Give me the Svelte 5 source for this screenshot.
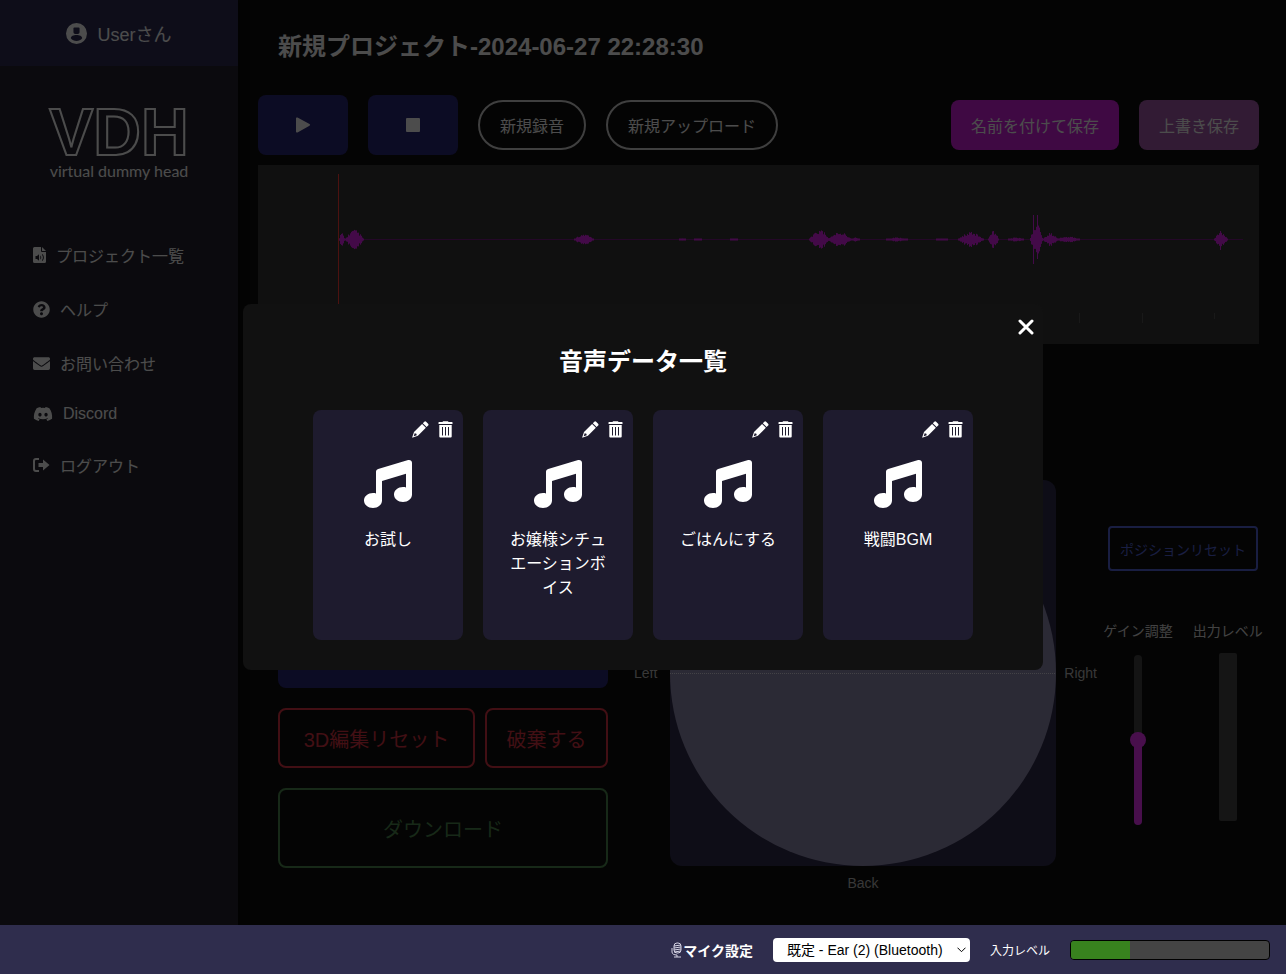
<script lang="ts">
  let gain = 50;
  let inputLevel = 30;
  let device = 'default';
  let isModalOpen = true;

  const menuItems = [
    { icon: 'file', label: 'プロジェクト一覧' },
    { icon: 'help', label: 'ヘルプ' },
    { icon: 'mail', label: 'お問い合わせ' },
    { icon: 'discord', label: 'Discord' },
    { icon: 'logout', label: 'ログアウト' }
  ];

  let audioList = [
    { id: 1, name: 'お試し' },
    { id: 2, name: 'お嬢様シチュエーションボイス' },
    { id: 3, name: 'ごはんにする' },
    { id: 4, name: '戦闘BGM' }
  ];

  // [開始位置, 終了位置, 振幅]
  const bursts = [
    [81, 87, 6], [87, 106, 9], [316, 336, 5], [421, 428, 1], [436, 444, 1], [472, 480, 1],
    [551, 572, 9], [570, 594, 7], [594, 602, 2], [628, 650, 2], [678, 690, 1], [700, 726, 7],
    [730, 741, 8], [750, 766, 2], [772, 785, 15], [785, 800, 6], [798, 822, 3], [956, 970, 7]
  ];

  function buildWave() {
    let d = '';
    for (const [start, end, amp] of bursts) {
      for (let x = start; x < end; x++) {
        const t = (x - start + 0.5) / (end - start);
        const noise = Math.abs(Math.sin(x * 12.9898) * 43758.5453) % 1;
        const h = Math.max(1, amp * Math.sin(Math.PI * t) * (0.6 + 0.5 * noise));
        d += `M${x + 0.5} ${74.5 - h}V${74.5 + h}`;
      }
    }
    return d + 'M775.5 50V99M779.5 50V94M962.5 66V85';
  }

  const wavePath = buildWave();

  function removeAudio(id: number) {
    audioList = audioList.filter(a => a.id !== id);
  }

  function resetPosition() {
    gain = 50;
  }
</script>

<div class="layout">
  <aside class="sidebar">
    <div class="user">
      <svg width="21" height="21" viewBox="0 0 24 24" aria-hidden="true">
        <path fill="currentColor" fill-rule="evenodd" d="M12 0a12 12 0 1 0 0 24 12 12 0 0 0 0-24zM9.500 5h5a1 1 0 0 1 1 1v4.500a2 2 0 0 1-2 2h-3a2 2 0 0 1-2-2V6a1 1 0 0 1 1-1zM5.500 17.500c0-2.500 3-3.800 6.500-3.800s6.500 1.300 6.500 3.800c-1.500 2-4 3-6.500 3s-5-1-6.500-3z" />
      </svg>
      <span>Userさん</span>
    </div>

    <div class="logo">
      <span class="logo-mark">VDH</span>
      <span class="logo-sub">virtual dummy head</span>
    </div>

    <nav>
      {#each menuItems as item}
        <a href="/">
          {#if item.icon === 'file'}
            <svg width="13" height="16" viewBox="0 0 13 16" aria-hidden="true">
              <path fill="currentColor" fill-rule="evenodd" d="M1.500 0H8v4a1 1 0 0 0 1 1h4v9.500a1.500 1.500 0 0 1-1.500 1.500h-10A1.500 1.500 0 0 1 0 14.500v-13A1.500 1.500 0 0 1 1.500 0zM9 0l4 4H9zM2.500 9v3H4l2 1.800V7.200L4 9zM7.300 8.500v4c1.200-.6 1.200-3.400 0-4zM9 7v1c1.200 1 1.200 4 0 5v1c2.500-1.200 2.500-5.800 0-7z" />
            </svg>
          {:else if item.icon === 'help'}
            <svg width="17" height="17" viewBox="0 0 512 512" aria-hidden="true">
              <path fill="currentColor" d="M504 256c0 137-111 248-248 248S8 393 8 256C8 119.100 119 8 256 8s248 111.100 248 248zM262.700 90c-54.500 0-89.300 23-116.600 63.800-3.500 5.300-2.400 12.400 2.700 16.200l34.700 26.300c5.200 4 12.600 3 16.700-2.100 17.900-22.700 30.100-35.800 57.300-35.800 20.400 0 45.700 13.100 45.700 33 0 15-12.400 22.700-32.500 34C247.100 238.500 216 255 216 296v4c0 6.600 5.400 12 12 12h56c6.600 0 12-5.400 12-12v-1.300c0-28.500 83.200-29.700 83.200-106.700 0-58-60.200-102-116.500-102zM256 338c-25.400 0-46 20.600-46 46s20.600 46 46 46 46-20.600 46-46-20.600-46-46-46z" />
            </svg>
          {:else if item.icon === 'mail'}
            <svg width="17" height="17" viewBox="0 0 512 512" aria-hidden="true">
              <path fill="currentColor" d="M502.300 190.800c3.900-3.100 9.700-.2 9.700 4.700V400c0 26.500-21.500 48-48 48H48c-26.500 0-48-21.500-48-48V195.600c0-5 5.700-7.800 9.700-4.700 22.400 17.400 52.100 39.500 154.100 113.600 21.100 15.400 56.700 47.800 92.200 47.600 35.700.3 72-32.800 92.300-47.600 102-74.100 131.600-96.300 154-113.700zM256 320c23.200.4 56.600-29.200 73.400-41.400 132.700-96.300 142.800-104.700 173.400-128.700 5.800-4.500 9.200-11.500 9.200-18.900v-19c0-26.500-21.500-48-48-48H48c-26.500 0-48 21.500-48 48v19c0 7.400 3.400 14.300 9.200 18.900 30.600 23.900 40.700 32.400 173.400 128.700 16.800 12.200 50.200 41.800 73.400 41.400z" />
            </svg>
          {:else if item.icon === 'discord'}
            <svg width="20" height="16" viewBox="0 1 16 14" aria-hidden="true">
              <path fill="currentColor" d="M13.545 2.907a13.200 13.200 0 0 0-3.257-1.011.05.05 0 0 0-.052.025c-.141.25-.297.577-.406.833a12.200 12.200 0 0 0-3.658 0 8 8 0 0 0-.412-.833.05.05 0 0 0-.052-.025c-1.125.194-2.220.534-3.257 1.011a.04.04 0 0 0-.021.018C.356 6.024-.213 9.047.066 12.032q.003.022.021.037a13.300 13.300 0 0 0 3.995 2.020.05.05 0 0 0 .056-.019q.463-.63.818-1.329a.05.05 0 0 0-.01-.059l-.018-.011a9 9 0 0 1-1.248-.595.05.05 0 0 1-.02-.066l.015-.019q.127-.095.248-.195a.05.05 0 0 1 .051-.007c2.619 1.196 5.454 1.196 8.041 0a.05.05 0 0 1 .053.007q.121.1.248.195a.05.05 0 0 1-.004.085 8 8 0 0 1-1.249.594.05.05 0 0 0-.03.03.05.05 0 0 0 .003.041c.24.465.515.909.817 1.329a.05.05 0 0 0 .056.019 13.200 13.200 0 0 0 4.001-2.020.05.05 0 0 0 .021-.037c.334-3.451-.559-6.449-2.366-9.106a.03.03 0 0 0-.02-.019m-8.198 7.307c-.789 0-1.438-.724-1.438-1.612s.637-1.613 1.438-1.613c.807 0 1.450.73 1.438 1.613 0 .888-.637 1.612-1.438 1.612m5.316 0c-.788 0-1.438-.724-1.438-1.612s.637-1.613 1.438-1.613c.807 0 1.451.73 1.438 1.613 0 .888-.631 1.612-1.438 1.612" />
            </svg>
          {:else}
            <svg width="17" height="16" viewBox="0 0 17 16" aria-hidden="true">
              <path d="M6 2H3a2 2 0 0 0-2 2v8a2 2 0 0 0 2 2h3" fill="none" stroke="currentColor" stroke-width="2" />
              <path fill="currentColor" d="M10 2.500 16.500 8 10 13.500V10H5.500V6H10z" />
            </svg>
          {/if}
          <span>{item.label}</span>
        </a>
      {/each}
    </nav>
  </aside>

  <main>
    <h1>新規プロジェクト-2024-06-27 22:28:30</h1>

    <div class="toolbar">
      <button class="transport" aria-label="再生">
        <svg width="16" height="18" viewBox="0 0 16 18"><path fill="currentColor" d="M1 2.500v13a1 1 0 0 0 1.500.9l12-6.600a1 1 0 0 0 0-1.700l-12-6.500A1 1 0 0 0 1 2.500z" /></svg>
      </button>
      <button class="transport" aria-label="停止">
        <svg width="14" height="14" viewBox="0 0 14 14"><rect width="14" height="14" rx="1" fill="currentColor" /></svg>
      </button>
      <button class="pill">新規録音</button>
      <button class="pill">新規アップロード</button>
      <button class="save save-as">名前を付けて保存</button>
      <button class="save">上書き保存</button>
    </div>

    <div class="waveform">
      <svg width="100%" height="179" viewBox="0 0 1001 179" preserveAspectRatio="none" aria-hidden="true">
        <path d="M81 74.500H985" stroke="#7a1d85" stroke-width="1" />
        <path d={wavePath} stroke="#e022f0" stroke-width="1" />
        <path d="M80.500 9V179" stroke="#ff3c38" stroke-width="1" />
        <path d="M821.500 148v10M884.500 148v10M956.500 148v6" stroke="#555" stroke-width="1" />
      </svg>
    </div>

    <div class="editor">
      <div class="actions">
        <button class="edit" aria-label="3D編集"></button>
        <div class="action-row">
          <button class="danger">3D編集リセット</button>
          <button class="danger">破棄する</button>
        </div>
        <button class="download">ダウンロード</button>
      </div>

      <div class="field">
        <span class="left">Left</span>
        <div class="pad">
          <div class="circle"></div>
        </div>
        <span class="right">Right</span>
        <span class="back">Back</span>
      </div>

      <div class="levels">
        <button class="position-reset" on:click={resetPosition}>ポジションリセット</button>
        <div class="level-row">
          <div class="level">
            <label for="gain">ゲイン調整</label>
            <input
              id="gain"
              type="range"
              min="0"
              max="100"
              bind:value={gain}
              style="background: linear-gradient(to top, #f035ff {gain}%, #454545 {gain}%)"
            />
          </div>
          <div class="level">
            <span>出力レベル</span>
            <div class="output-bar"></div>
          </div>
        </div>
      </div>
    </div>
  </main>
</div>

{#if isModalOpen}
  <div class="overlay">
    <div class="modal" role="dialog" aria-labelledby="modal-title">
      <button class="close" aria-label="閉じる" on:click={() => (isModalOpen = false)}>
        <svg width="16" height="16" viewBox="0 0 16 16"><path d="M2 2l12 12M14 2L2 14" stroke="currentColor" stroke-width="3" stroke-linecap="round" /></svg>
      </button>
      <h2 id="modal-title">音声データ一覧</h2>
      <div class="cards">
        {#each audioList as audio (audio.id)}
          <div class="card">
            <div class="card-actions">
              <button aria-label="名前を変更">
                <svg width="17" height="17" viewBox="0 0 17 17">
                  <path fill="currentColor" fill-rule="evenodd" d="M12.300.8a1.300 1.300 0 0 1 1.800 0l2 2a1.300 1.300 0 0 1 0 1.800l-1.500 1.500-3.800-3.800zM10.100 3l3.800 3.800-8 8L.9 16.600a.5.5 0 0 1-.6-.6L2 11zM2.700 12.300l-1 3 3-1-.3-1.600z" />
                </svg>
              </button>
              <button aria-label="削除" on:click={() => removeAudio(audio.id)}>
                <svg width="15" height="17" viewBox="0 0 15 17">
                  <path fill="currentColor" fill-rule="evenodd" d="M4.500 1 5 .3h5l.5.7H14a.5.5 0 0 1 .5.500V3H.5V1.500A.5.5 0 0 1 1 1zM1.300 4h12.400v11.500a1 1 0 0 1-1 1H2.300a1 1 0 0 1-1-1zM4 6v8.500h1V6zM7 6v8.500h1V6zM10 6v8.500h1V6z" />
                </svg>
              </button>
            </div>
            <svg class="note" width="48" height="48" viewBox="0 0 512 512" aria-hidden="true">
              <path fill="currentColor" d="M499.100 6.300c8.100 6 12.900 15.600 12.900 25.700v336c0 44.200-43 80-96 80s-96-35.800-96-80 43-80 96-80c11.200 0 22 1.600 32 4.600V147L192 223.800V432c0 44.200-43 80-96 80s-96-35.800-96-80 43-80 96-80c11.200 0 22 1.600 32 4.600V128c0-14.100 9.300-26.600 22.800-30.700l320-96c9.700-2.900 20.200-1.100 28.300 5z" />
            </svg>
            <p>{audio.name}</p>
          </div>
        {/each}
      </div>
    </div>
  </div>
{/if}

<footer>
  <label class="mic" for="device">
    <svg width="12" height="16" viewBox="0 0 12 16" aria-hidden="true">
      <g fill="none" stroke="#d5d3e4" stroke-width="1">
        <rect x="3" y="1" width="7" height="10" rx="3" />
        <path d="M3 4l7-1M3 6l7-1M3 8l7-1M3 10l7-1M1 6v4c0 2 2 3 5 3M6 13v2M3 15h7" />
      </g>
    </svg>
    マイク設定
  </label>
  <div class="device">
    <select id="device" bind:value={device}>
      <option value="default">既定 - Ear (2) (Bluetooth)</option>
    </select>
    <svg width="9" height="6" viewBox="0 0 9 6" aria-hidden="true"><path d="M.5.7l4 4 4-4" fill="none" stroke="#000" /></svg>
  </div>
  <span class="input-label">入力レベル</span>
  <div class="meter" role="meter" aria-label="入力レベル" aria-valuenow={inputLevel} aria-valuemin="0" aria-valuemax="100">
    <div class="meter-fill" style="width: {inputLevel}%"></div>
  </div>
</footer>

<style>
  :global(body) {
    background: #0e0e0e;
    color: #fff;
    font-family: "Liberation Sans", Arial, "Noto Sans CJK JP", sans-serif;
    font-size: 16px;
  }

  button {
    font-family: inherit;
    font-size: 16px;
    color: inherit;
    padding: 0;
    border: none;
    background: none;
    cursor: pointer;
  }

  svg {
    flex-shrink: 0;
  }

  .layout {
    display: flex;
    min-height: 100vh;
  }

  .sidebar {
    width: 238px;
    flex-shrink: 0;
    background: #252430;
    box-shadow: 0 0 8px #000;
  }

  .user {
    display: flex;
    align-items: center;
    justify-content: center;
    gap: 10px;
    height: 66px;
    background: #2f2d56;
    font-size: 18px;
  }

  .logo {
    display: flex;
    flex-direction: column;
    align-items: center;
    padding-top: 40px;
  }

  .logo-mark {
    font-size: 66px;
    font-weight: bold;
    line-height: 52px;
    color: transparent;
    -webkit-text-stroke: 2px #fff;
  }

  .logo-sub {
    font-family: Lato, sans-serif;
    font-size: 16px;
    line-height: 26px;
  }

  nav {
    display: flex;
    flex-direction: column;
    gap: 30px;
    padding: 59px 20px 0 33px;
  }

  nav a {
    display: flex;
    align-items: center;
    gap: 10px;
    color: inherit;
    text-decoration: none;
  }

  main {
    flex: 1;
    min-width: 0;
    padding: 29px 27px 80px 20px;
  }

  h1 {
    margin: 0 0 30px;
    padding-left: 20px;
    font-size: 24px;
    line-height: 36px;
  }

  .toolbar {
    display: flex;
    align-items: center;
    gap: 20px;
    height: 60px;
    margin-bottom: 10px;
  }

  .transport {
    display: flex;
    align-items: center;
    justify-content: center;
    width: 90px;
    height: 60px;
    border-radius: 8px;
    background: #2b2878;
  }

  .pill {
    height: 50px;
    padding: 0 20px;
    border: 2px solid #d4d4d4;
    border-radius: 25px;
  }

  .save {
    height: 50px;
    padding: 0 20px;
    border-radius: 8px;
    background: #a85cae;
  }

  .save-as {
    margin-left: auto;
    background: #d21fe0;
  }

  .waveform {
    background: #383838;
  }

  .waveform svg {
    display: block;
  }

  .editor {
    display: grid;
    grid-template-columns: 330px minmax(0, 1fr) 160px;
    align-items: start;
    padding: 136px 0 0 20px;
    margin-right: -4px;
  }

  .actions {
    display: flex;
    flex-direction: column;
    gap: 20px;
    padding-top: 128px;
  }

  .edit {
    height: 80px;
    border-radius: 8px;
    background: #2b2878;
  }

  .action-row {
    display: grid;
    grid-template-columns: 8fr 5fr;
    gap: 10px;
  }

  .danger {
    height: 60px;
    border: 2px solid #dc3545;
    border-radius: 8px;
    color: #dc3545;
    font-size: 20px;
  }

  .download {
    height: 80px;
    border: 2px solid #4f8a50;
    border-radius: 8px;
    color: #4f8a50;
    font-size: 20px;
  }

  .field {
    display: grid;
    grid-template-columns: 36px minmax(0, 1fr) 41px;
    align-items: center;
    padding: 0 6px 0 26px;
    color: #bbb;
    font-size: 14px;
    line-height: 20px;
  }

  .pad {
    aspect-ratio: 1;
    border-radius: 12px;
    background: #2f2d4d;
    overflow: hidden;
  }

  .circle {
    height: 100%;
    border-radius: 50%;
    background:
      repeating-linear-gradient(to right, #e0deea 0 1px, transparent 1px 2px) center / 100% 1px no-repeat,
      #928cb2;
  }

  .right {
    text-align: right;
  }

  .back {
    grid-column: 2;
    padding-top: 7px;
    text-align: center;
  }

  .levels {
    display: flex;
    flex-direction: column;
    align-items: center;
    padding-top: 46px;
  }

  .position-reset {
    width: 150px;
    height: 45px;
    border: 2px solid #5566dd;
    border-radius: 4px;
    color: #5566dd;
    font-size: 14px;
    white-space: nowrap;
  }

  .level-row {
    display: flex;
    gap: 20px;
    margin-top: 50px;
  }

  .level {
    display: flex;
    flex-direction: column;
    align-items: center;
    gap: 12px;
    color: #ddd;
    font-size: 14px;
    line-height: 20px;
    white-space: nowrap;
  }

  .level input {
    appearance: none;
    writing-mode: vertical-lr;
    direction: rtl;
    width: 8px;
    height: 170px;
    margin: 2px 0 0;
    border-radius: 4px;
  }

  .level input::-webkit-slider-thumb {
    appearance: none;
    width: 16px;
    height: 16px;
    border-radius: 50%;
    background: #f035ff;
  }

  .output-bar {
    width: 18px;
    height: 168px;
    border-radius: 2px;
    background: #484848;
  }

  .overlay {
    position: fixed;
    inset: 0;
    display: flex;
    align-items: center;
    justify-content: center;
    background: rgba(0, 0, 0, 0.7);
  }

  .modal {
    position: relative;
    box-sizing: border-box;
    width: 800px;
    max-width: 100%;
    padding: 40px 20px 30px;
    border-radius: 8px;
    background: #111;
  }

  .close {
    position: absolute;
    top: 15px;
    right: 9px;
    display: flex;
  }

  h2 {
    margin: 0 0 30px;
    font-size: 24px;
    line-height: 36px;
    text-align: center;
  }

  .cards {
    display: flex;
    flex-wrap: wrap;
    justify-content: center;
    gap: 20px;
  }

  .card {
    box-sizing: border-box;
    display: flex;
    flex-direction: column;
    align-items: center;
    width: 150px;
    height: 230px;
    padding: 10px;
    border-radius: 8px;
    background: #1e1b2e;
  }

  .card-actions {
    display: flex;
    align-self: flex-end;
    gap: 9px;
    height: 18px;
  }

  .card-actions button {
    display: flex;
    align-items: center;
  }

  .note {
    margin: 22px 0 20px;
  }

  .card p {
    margin: 0;
    padding: 0 10px;
    line-height: 24px;
    text-align: center;
    word-break: break-all;
  }

  footer {
    position: fixed;
    left: 0;
    right: 0;
    bottom: 0;
    display: flex;
    align-items: center;
    justify-content: flex-end;
    gap: 20px;
    height: 49px;
    padding-right: 16px;
    background: #2f2d4d;
  }

  .mic {
    display: flex;
    align-items: center;
    font-size: 14px;
    font-weight: bold;
  }

  .device {
    position: relative;
    display: flex;
  }

  .device svg {
    position: absolute;
    top: 9px;
    right: 4px;
    pointer-events: none;
  }

  select {
    appearance: none;
    width: 197px;
    height: 24px;
    padding: 0 16px 0 14px;
    border: none;
    border-radius: 4px;
    background: #fff;
    color: #000;
    font-family: inherit;
    font-size: 14px;
  }

  .input-label {
    font-size: 12px;
  }

  .meter {
    box-sizing: border-box;
    width: 200px;
    height: 20px;
    border: 1px solid #000;
    border-radius: 4px;
    background: #444;
    overflow: hidden;
  }

  .meter-fill {
    height: 100%;
    background: #38821e;
  }
</style>
